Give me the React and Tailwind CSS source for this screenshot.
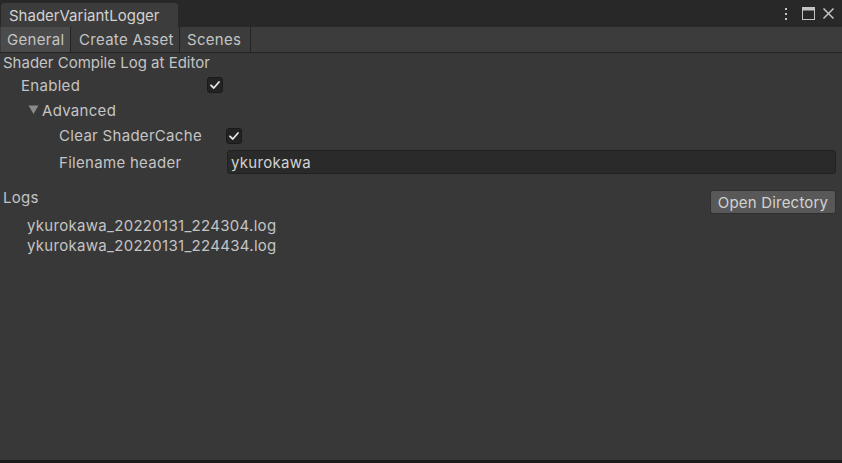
import React from "react";

const Check = () => (
  <svg width="12" height="12" viewBox="0 0 12 12" fill="none">
    <path d="M2 6.3 L4.8 9 L10 3" stroke="#e6e6e6" strokeWidth="1.8" strokeLinecap="round" strokeLinejoin="round" />
  </svg>
);

const Box = () => (
  <div className="w-[16px] h-[16px] rounded-[3px] bg-[#232323] border border-[#1a1a1a] flex items-center justify-center">
    <Check />
  </div>
);

export default function App() {
  return (
    <div
      className="w-[842px] h-[463px] bg-[#383838] text-[#c4c4c4] flex flex-col overflow-hidden text-[15px] tracking-[0.3px]"
      style={{ fontFamily: "Inter, 'Noto Sans', sans-serif" }}
    >
      {/* title bar */}
      <div className="h-[27px] bg-[#282828] flex items-end pl-[1px] shrink-0">
        <div className="h-[24px] w-[177px] bg-[#3c3c3c] rounded-t-[3px] flex items-center pl-[8px] text-[#d2d2d2] leading-none tracking-[0px]">
          ShaderVariantLogger
        </div>
        <div className="flex-1" />
        <div className="flex items-center self-center pr-[7px]">
          <svg width="6" height="14" viewBox="0 0 6 14" className="mr-[13px]">
            <rect x="2" y="1" width="2" height="2" fill="#c4c4c4" />
            <rect x="2" y="6" width="2" height="2" fill="#c4c4c4" />
            <rect x="2" y="11" width="2" height="2" fill="#c4c4c4" />
          </svg>
          <svg width="13" height="13" viewBox="0 0 13 13" className="mr-[7px]">
            <rect x="0.5" y="0.5" width="12" height="12" fill="none" stroke="#c4c4c4" strokeWidth="1" />
            <rect x="0.5" y="0.5" width="12" height="3" fill="#c4c4c4" />
          </svg>
          <svg width="13" height="13" viewBox="0 0 13 13">
            <path d="M1.5 1.5 L11.5 11.5 M11.5 1.5 L1.5 11.5" stroke="#c4c4c4" strokeWidth="1.5" />
          </svg>
        </div>
      </div>
      {/* toolbar */}
      <div className="h-[26px] bg-[#3c3c3c] border-b border-[#232323] flex items-stretch shrink-0 pl-[1px]">
        <div className="w-[70px] bg-[#4b4b4b] border-r border-[#232323] flex items-center pl-[6px] leading-none">General</div>
        <div className="w-[109px] border-r border-[#232323] flex items-center pl-[8px] leading-none">Create Asset</div>
        <div className="w-[71px] border-r border-[#232323] flex items-center pl-[7px] leading-none">Scenes</div>
      </div>
      {/* content */}
      <div className="flex flex-col">
        <div className="h-[19px] flex items-center pl-[3px] leading-none tracking-[0px]">Shader Compile Log at Editor</div>
        <div className="h-[26px] flex items-center pl-[21px] leading-none">
          <span className="w-[186px]">Enabled</span>
          <Box />
        </div>
        <div className="h-[25px] flex items-center pl-[28px] leading-none">
          <svg width="11" height="11" viewBox="0 0 11 11" className="mr-[3px] mb-[2px]">
            <path d="M0.5 1.5 L10.5 1.5 L5.5 10 Z" fill="#8a8a8a" />
          </svg>
          <span>Advanced</span>
        </div>
        <div className="h-[25px] flex items-center pl-[59px] leading-none">
          <span className="w-[167px]">Clear ShaderCache</span>
          <Box />
        </div>
        <div className="h-[28px] flex items-center pl-[59px] pr-[6px] leading-none">
          <span className="w-[168px]">Filename header</span>
          <div className="flex-1 h-[24px] bg-[#2a2a2a] border border-[#212121] rounded-[3px] flex items-center pl-[3px] text-[#d2d2d2]">
            ykurokawa
          </div>
        </div>
        <div className="h-[10px]" />
        <div className="h-[29px] flex items-start justify-between pl-[3px] pr-[6px] leading-none">
          <span className="pt-[4px]">Logs</span>
          <div className="h-[24px] w-[126px] bg-[#585858] border border-[#2f2f2f] rounded-[3px] flex items-center justify-center text-[#d2d2d2] mt-[4px] tracking-[0.2px]">
            Open Directory
          </div>
        </div>
        <div className="flex flex-col pl-[27px] leading-none">
          <div className="h-[20px] flex items-center">ykurokawa_20220131_224304.log</div>
          <div className="h-[20px] flex items-center">ykurokawa_20220131_224434.log</div>
        </div>
      </div>
      <div className="flex-1" />
      <div className="h-[3px] bg-[#1a1a1a] shrink-0" />
    </div>
  );
}
